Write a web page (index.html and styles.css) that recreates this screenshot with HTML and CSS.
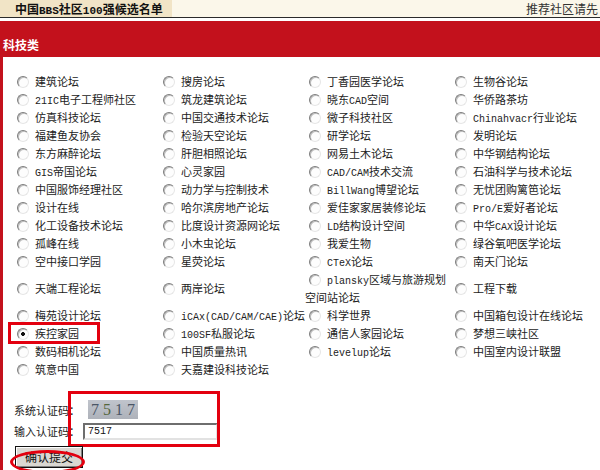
FILE: index.html
```html
<!DOCTYPE html>
<html lang="zh-CN">
  <head>
    <meta charset="UTF-8" />
    <title>中国BBS社区100强候选名单</title>
    <link rel="stylesheet" href="styles.css">
  </head>
  <body>
    <header class="top-bar">
      <div class="top-tab">中国<span class="en">BBS</span>社区<span class="en">100</span>强候选名单</div>
      <div class="top-note">推荐社区请先</div>
    </header>

    <h2 class="kategori">科技类</h2>

    <section class="indhold">
      <form class="liste">
        <label class="item"><input type="radio" name="bbs">建筑论坛</label>
        <label class="item"><input type="radio" name="bbs">搜房论坛</label>
        <label class="item"><input type="radio" name="bbs">丁香园医学论坛</label>
        <label class="item"><input type="radio" name="bbs">生物谷论坛</label>

        <label class="item"><input type="radio" name="bbs"><span class="en">21IC</span>电子工程师社区</label>
        <label class="item"><input type="radio" name="bbs">筑龙建筑论坛</label>
        <label class="item"><input type="radio" name="bbs">晓东<span class="en">CAD</span>空间</label>
        <label class="item"><input type="radio" name="bbs">华侨路茶坊</label>

        <label class="item"><input type="radio" name="bbs">仿真科技论坛</label>
        <label class="item"><input type="radio" name="bbs">中国交通技术论坛</label>
        <label class="item"><input type="radio" name="bbs">微子科技社区</label>
        <label class="item"><input type="radio" name="bbs"><span class="en">Chinahvacr</span>行业论坛</label>

        <label class="item"><input type="radio" name="bbs">福建鱼友协会</label>
        <label class="item"><input type="radio" name="bbs">检验天空论坛</label>
        <label class="item"><input type="radio" name="bbs">研学论坛</label>
        <label class="item"><input type="radio" name="bbs">发明论坛</label>

        <label class="item"><input type="radio" name="bbs">东方麻醉论坛</label>
        <label class="item"><input type="radio" name="bbs">肝胆相照论坛</label>
        <label class="item"><input type="radio" name="bbs">网易土木论坛</label>
        <label class="item"><input type="radio" name="bbs">中华钢结构论坛</label>

        <label class="item"><input type="radio" name="bbs"><span class="en">GIS</span>帝国论坛</label>
        <label class="item"><input type="radio" name="bbs">心灵家园</label>
        <label class="item"><input type="radio" name="bbs"><span class="en">CAD/CAM</span>技术交流</label>
        <label class="item"><input type="radio" name="bbs">石油科学与技术论坛</label>

        <label class="item"><input type="radio" name="bbs">中国服饰经理社区</label>
        <label class="item"><input type="radio" name="bbs">动力学与控制技术</label>
        <label class="item"><input type="radio" name="bbs"><span class="en">BillWang</span>博望论坛</label>
        <label class="item"><input type="radio" name="bbs">无忧团购篱笆论坛</label>

        <label class="item"><input type="radio" name="bbs">设计在线</label>
        <label class="item"><input type="radio" name="bbs">哈尔滨房地产论坛</label>
        <label class="item"><input type="radio" name="bbs">爱佳家家居装修论坛</label>
        <label class="item"><input type="radio" name="bbs"><span class="en">Pro/E</span>爱好者论坛</label>

        <label class="item"><input type="radio" name="bbs">化工设备技术论坛</label>
        <label class="item"><input type="radio" name="bbs">比度设计资源网论坛</label>
        <label class="item"><input type="radio" name="bbs"><span class="en">LD</span>结构设计空间</label>
        <label class="item"><input type="radio" name="bbs">中华<span class="en">CAX</span>设计论坛</label>

        <label class="item"><input type="radio" name="bbs">孤峰在线</label>
        <label class="item"><input type="radio" name="bbs">小木虫论坛</label>
        <label class="item"><input type="radio" name="bbs">我爱生物</label>
        <label class="item"><input type="radio" name="bbs">绿谷氧吧医学论坛</label>

        <label class="item"><input type="radio" name="bbs">空中接口学园</label>
        <label class="item"><input type="radio" name="bbs">星荧论坛</label>
        <label class="item"><input type="radio" name="bbs"><span class="en">CTeX</span>论坛</label>
        <label class="item"><input type="radio" name="bbs">南天门论坛</label>

        <label class="item"><input type="radio" name="bbs">天端工程论坛</label>
        <label class="item"><input type="radio" name="bbs">两岸论坛</label>
        <label class="item to-linjer"><input type="radio" name="bbs"><span class="en">plansky</span>区域与旅游规划<br>空间站论坛</label>
        <label class="item"><input type="radio" name="bbs">工程下载</label>

        <label class="item"><input type="radio" name="bbs">梅苑设计论坛</label>
        <label class="item"><input type="radio" name="bbs"><span class="en">iCAx(CAD/CAM/CAE)</span>论坛</label>
        <label class="item"><input type="radio" name="bbs">科学世界</label>
        <label class="item"><input type="radio" name="bbs">中国箱包设计在线论坛</label>

        <label class="item markeret"><input type="radio" name="bbs" checked>疾控家园</label>
        <label class="item"><input type="radio" name="bbs"><span class="en">100SF</span>私服论坛</label>
        <label class="item"><input type="radio" name="bbs">通信人家园论坛</label>
        <label class="item"><input type="radio" name="bbs">梦想三峡社区</label>

        <label class="item"><input type="radio" name="bbs">数码相机论坛</label>
        <label class="item"><input type="radio" name="bbs">中国质量热讯</label>
        <label class="item"><input type="radio" name="bbs"><span class="en">levelup</span>论坛</label>
        <label class="item"><input type="radio" name="bbs">中国室内设计联盟</label>

        <label class="item"><input type="radio" name="bbs">筑意中国</label>
        <label class="item"><input type="radio" name="bbs">天嘉建设科技论坛</label>
      </form>

      <!-- kontrol kode -->
      <div class="kode">
        <span class="label">系统认证码：</span>
        <span class="captcha"><span>7</span><span class="groen">5</span><span>1</span><span>7</span></span>
        <span class="label">输入认证码：</span>
        <input class="kode-input" type="text" value="7517">
        <div class="ramme"></div>
      </div>

      <div class="knap-holder">
        <button class="knap">确认提交</button>
        <div class="oval"></div>
      </div>
    </section>
  </body>
</html>
```

FILE: styles.css
```css
body {
  margin: 0;
  background-color: #fff;
  font-family: "Noto Sans CJK SC", sans-serif;
  font-size: 11px;
  color: #222;
  overflow: hidden;
}

.en {
  font-family: "Liberation Mono", "Noto Sans CJK SC", monospace;
  font-size: 10px;
  line-height: 1;
}

.top-bar {
  display: flex;
  justify-content: space-between;
  height: 17px;
  line-height: 17px;
  background-color: #fbf7ea;
  border-bottom: 1px solid #2b2b2b;
}

.top-tab {
  width: 157px;
  padding-left: 15px;
  background-color: #f1e4c6;
  font-size: 12px;
  font-weight: bold;
  color: #111;
}

.top-tab .en {
  font-size: 11px;
}

.top-note {
  padding-right: 2px;
  font-size: 12px;
  color: #333;
}

.kategori {
  margin: 3px 0 0 0;
  height: 36px;
  box-sizing: border-box;
  padding: 15px 0 0 3px;
  line-height: 18px;
  background-color: #c3111c;
  color: #fff;
  font-size: 12px;
  font-weight: bold;
}

.indhold {
  border-left: 3px solid #c3111c;
  padding: 15px 0 0 10px;
  min-height: 420px;
}

.liste {
  display: grid;
  grid-template-columns: repeat(4, 146px);
  align-items: center;
  margin: 0;
}

.item {
  display: block;
  height: 18px;
  line-height: 18px;
  white-space: nowrap;
}

.item.to-linjer {
  height: 36px;
}

.item input {
  appearance: none;
  display: inline-block;
  width: 12px;
  height: 12px;
  margin: 0 6px 0 4px;
  box-sizing: border-box;
  border-radius: 50%;
  border: 1px solid;
  border-color: #7d7d7d #e6e6e6 #e6e6e6 #7d7d7d;
  background-color: #fdfdfd;
  box-shadow: inset 1px 1px 0 #bdbdbd;
  vertical-align: -2px;
}

.item input:checked {
  background: radial-gradient(circle, #111 0 1.6px, #fdfdfd 2.2px);
}

.markeret {
  position: relative;
}

.markeret::after {
  content: "";
  position: absolute;
  left: -5px;
  top: -2px;
  width: 92px;
  height: 22px;
  box-sizing: border-box;
  border: 3px solid #e3000f;
}

.kode {
  position: relative;
  display: grid;
  grid-template-columns: 69px 136px;
  grid-template-rows: 23px 20px;
  align-items: center;
  margin-top: 20px;
  padding-left: 1px;
}

.kode .label {
  font-size: 11px;
  line-height: 18px;
  color: #222;
}

.captcha {
  display: inline-block;
  width: 50px;
  height: 19px;
  margin-left: 5px;
  box-sizing: border-box;
  padding-left: 3px;
  background: linear-gradient(#c0c4cc, #aeb2ba);
  font-family: "Liberation Serif", serif;
  font-size: 16px;
  line-height: 19px;
  letter-spacing: 4px;
  color: #4a5566;
}

.captcha .groen {
  color: #53663c;
}

.kode-input {
  width: 135px;
  height: 17px;
  box-sizing: border-box;
  margin: 0;
  padding: 0 3px;
  border: 2px solid;
  border-color: #6e6e6e #e2e2e2 #e2e2e2 #6e6e6e;
  font-family: "Liberation Mono", monospace;
  font-size: 10px;
  color: #111;
}

.ramme {
  position: absolute;
  left: 55px;
  top: -7px;
  width: 152px;
  height: 56px;
  box-sizing: border-box;
  border: 3px solid #e3000f;
}

.knap-holder {
  position: relative;
  margin-top: 5px;
  padding-left: 2px;
}

.knap {
  width: 68px;
  height: 22px;
  padding: 0;
  background-color: #dad7d2;
  border: 1px solid #111;
  box-shadow: inset 1px 1px 0 #fff, inset -1px -1px 0 #808080;
  font-family: "Noto Sans CJK SC", sans-serif;
  font-size: 12px;
  line-height: 18px;
  color: #111;
}

.oval {
  position: absolute;
  left: -3px;
  top: 4px;
  width: 75px;
  height: 24px;
  box-sizing: border-box;
  border: 3px solid #e3000f;
  border-radius: 50%;
}
```
